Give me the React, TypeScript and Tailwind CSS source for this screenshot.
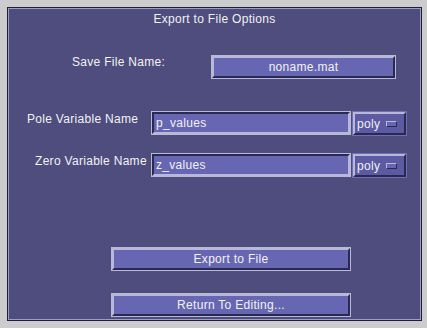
const LIGHT = 'border-[#b9b8d8]'

function RaisedBox({ children, className = '' }: { children: React.ReactNode; className?: string }) {
  return (
    <div className={`border ${LIGHT} ${className}`}>
      <div className="h-full w-full border-2 border-t-[#b9b8d8] border-l-[#b9b8d8] border-b-[#2a2950] border-r-[#2a2950] bg-[#6766b2] flex items-center justify-center">
        {children}
      </div>
    </div>
  )
}

function SunkenField({ value }: { value: string }) {
  return (
    <div className={`border ${LIGHT} w-[200px] h-[24px]`}>
      <div className="h-full w-full border-2 border-t-[#2a2950] border-l-[#2a2950] border-b-[#b9b8d8] border-r-[#b9b8d8] bg-[#6766b2] flex items-center pl-[2px]">
        {value}
      </div>
    </div>
  )
}

function PolyMenu() {
  return (
    <div className="ml-[1px] w-[55px] h-[25px] border border-[#6f6eb8]">
      <div className="h-full w-full border-2 border-t-[#b9b8d8] border-l-[#b9b8d8] border-b-[#2a2950] border-r-[#2a2950] bg-[#5b5aa3] flex items-center pl-[2px]">
        <span>poly</span>
        <span className="ml-[6px] w-[11px] h-[6px] border border-t-[#b9b8d8] border-l-[#b9b8d8] border-b-[#2a2950] border-r-[#2a2950] bg-[#6766b2]" />
      </div>
    </div>
  )
}

export default function App() {
  return (
    <div
      className="w-[427px] h-[328px] bg-[#cccccc] pt-[7px] pl-[7px] text-[12px] tracking-[0.3px] text-[#f2f2f2] overflow-hidden"
      style={{ fontFamily: '"Liberation Sans", Arial, sans-serif' }}
    >
      <div className="w-[415px] h-[314px] border border-[#1e1d3a] bg-[#4e4d7e] shadow-[inset_0_0_0_1px_#9d9cc4] flex flex-col">
        {/* Title */}
        <div className="mt-[3px] h-[16px] leading-[16px] text-center">Export to File Options</div>

        {/* Save file name */}
        <div className="mt-[28px] flex items-start pl-[64px]">
          <div className="w-[139px] leading-[14px]">Save File Name:</div>
          <RaisedBox className="w-[185px] h-[24px]">noname.mat</RaisedBox>
        </div>

        {/* Pole variable */}
        <div className="mt-[32px] flex items-start pl-[19px]">
          <div className="w-[124px] mt-[1px] leading-[14px]">Pole Variable Name</div>
          <SunkenField value="p_values" />
          <PolyMenu />
        </div>

        {/* Zero variable */}
        <div className="mt-[17px] flex items-start pl-[27px]">
          <div className="w-[116px] mt-[1px] leading-[14px]">Zero Variable Name</div>
          <SunkenField value="z_values" />
          <PolyMenu />
        </div>

        {/* Action buttons */}
        <div className="mt-[69px] pl-[103px] flex flex-col gap-[22px]">
          <RaisedBox className="w-[240px] h-[24px]">Export to File</RaisedBox>
          <RaisedBox className="w-[240px] h-[24px]">Return To Editing...</RaisedBox>
        </div>
      </div>
    </div>
  )
}
